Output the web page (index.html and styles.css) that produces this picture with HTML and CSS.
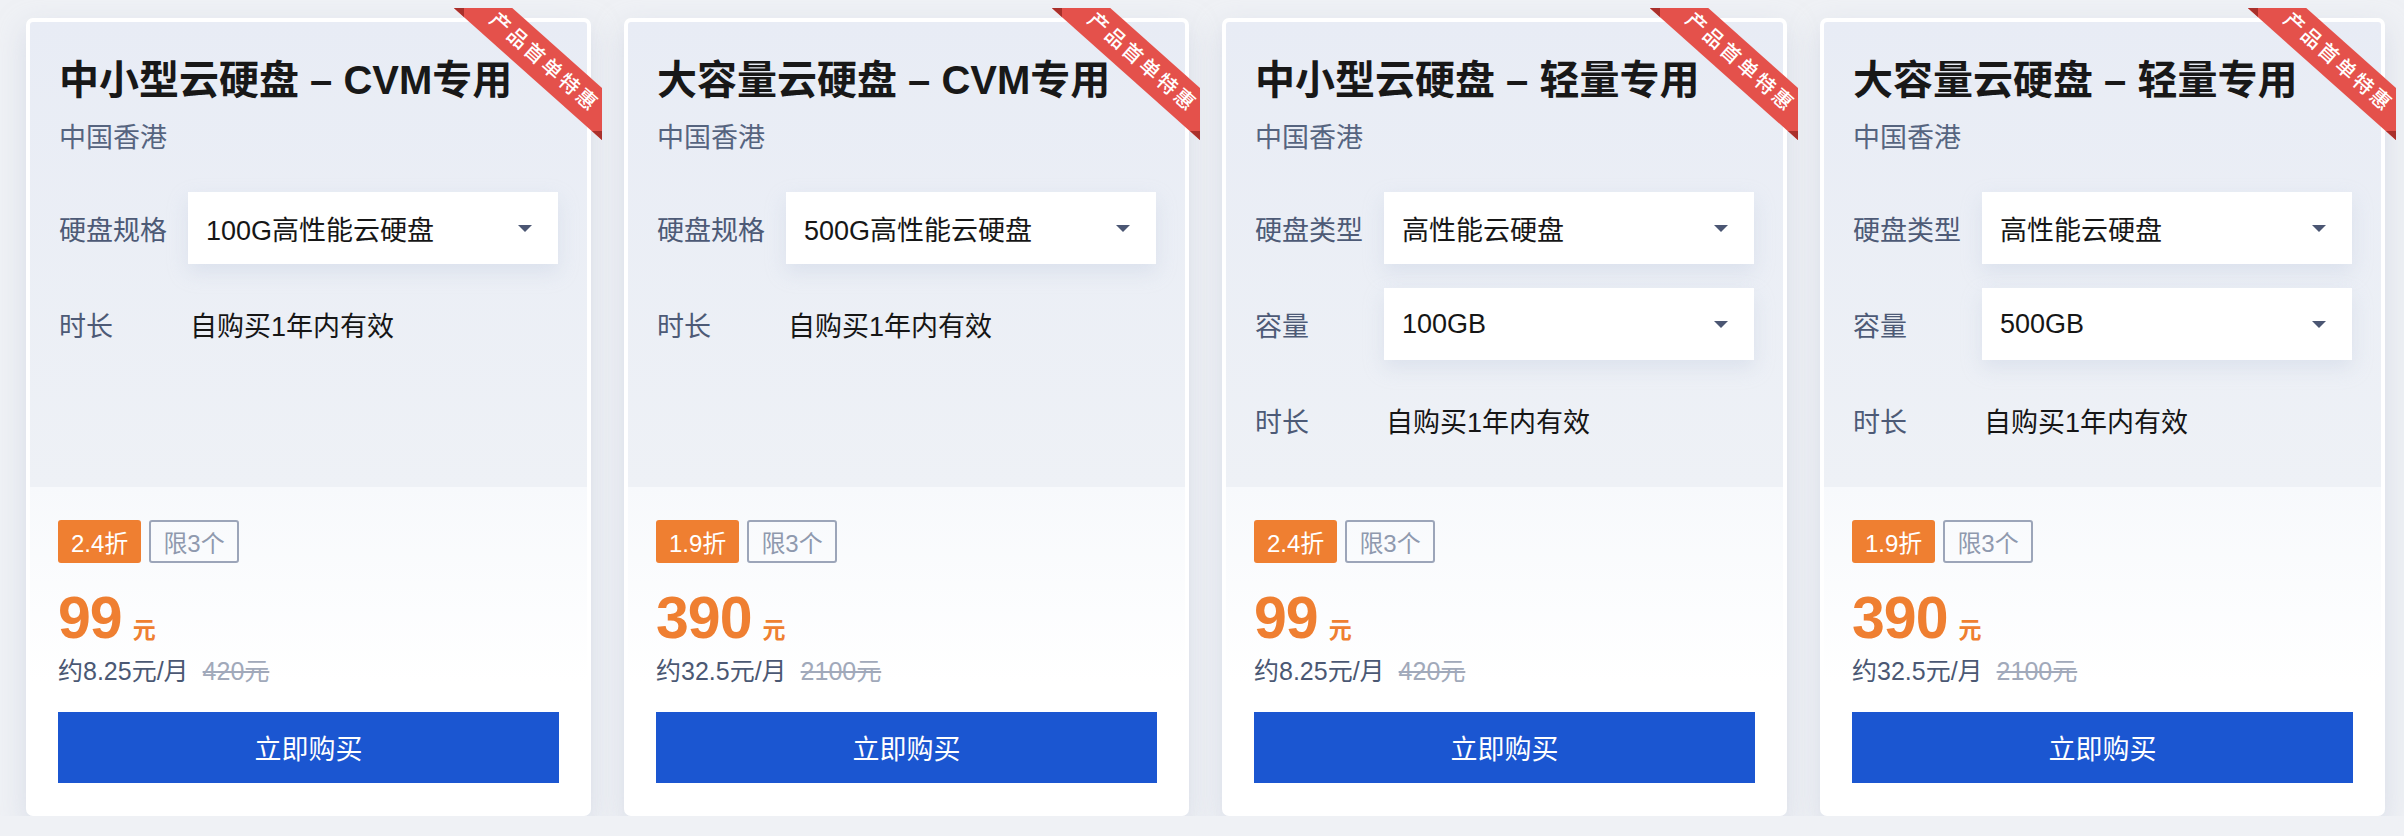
FILE: index.html
```html
<!DOCTYPE html>
<html lang="zh-CN">
<head>
<meta charset="utf-8">
<title>云硬盘特惠</title>
<link rel="stylesheet" href="styles.css">
</head>
<body>
<div class="cards">

  <div class="card">
    <div class="ribbon"><span>产品首单特惠</span></div>
    <div class="top">
      <h2 class="title">中小型云硬盘 – CVM专用</h2>
      <div class="region">中国香港</div>
      <div class="rows">
        <div class="row"><span class="label">硬盘规格</span><div class="select"><span>100G高性能云硬盘</span><i class="arrow"></i></div></div>
        <div class="row"><span class="label">时长</span><span class="value">自购买1年内有效</span></div>
      </div>
    </div>
    <div class="bottom">
      <div class="tags"><span class="tag-off">2.4折</span><span class="tag-limit">限3个</span></div>
      <div class="price"><span class="num">99</span><span class="unit">元</span></div>
      <div class="monthly"><span>约8.25元/月</span><s>420元</s></div>
      <button class="buy">立即购买</button>
    </div>
  </div>

  <div class="card">
    <div class="ribbon"><span>产品首单特惠</span></div>
    <div class="top">
      <h2 class="title">大容量云硬盘 – CVM专用</h2>
      <div class="region">中国香港</div>
      <div class="rows">
        <div class="row"><span class="label">硬盘规格</span><div class="select"><span>500G高性能云硬盘</span><i class="arrow"></i></div></div>
        <div class="row"><span class="label">时长</span><span class="value">自购买1年内有效</span></div>
      </div>
    </div>
    <div class="bottom">
      <div class="tags"><span class="tag-off">1.9折</span><span class="tag-limit">限3个</span></div>
      <div class="price"><span class="num">390</span><span class="unit">元</span></div>
      <div class="monthly"><span>约32.5元/月</span><s>2100元</s></div>
      <button class="buy">立即购买</button>
    </div>
  </div>

  <div class="card">
    <div class="ribbon"><span>产品首单特惠</span></div>
    <div class="top">
      <h2 class="title">中小型云硬盘 – 轻量专用</h2>
      <div class="region">中国香港</div>
      <div class="rows">
        <div class="row"><span class="label">硬盘类型</span><div class="select"><span>高性能云硬盘</span><i class="arrow"></i></div></div>
        <div class="row"><span class="label">容量</span><div class="select"><span>100GB</span><i class="arrow"></i></div></div>
        <div class="row"><span class="label">时长</span><span class="value">自购买1年内有效</span></div>
      </div>
    </div>
    <div class="bottom">
      <div class="tags"><span class="tag-off">2.4折</span><span class="tag-limit">限3个</span></div>
      <div class="price"><span class="num">99</span><span class="unit">元</span></div>
      <div class="monthly"><span>约8.25元/月</span><s>420元</s></div>
      <button class="buy">立即购买</button>
    </div>
  </div>

  <div class="card">
    <div class="ribbon"><span>产品首单特惠</span></div>
    <div class="top">
      <h2 class="title">大容量云硬盘 – 轻量专用</h2>
      <div class="region">中国香港</div>
      <div class="rows">
        <div class="row"><span class="label">硬盘类型</span><div class="select"><span>高性能云硬盘</span><i class="arrow"></i></div></div>
        <div class="row"><span class="label">容量</span><div class="select"><span>500GB</span><i class="arrow"></i></div></div>
        <div class="row"><span class="label">时长</span><span class="value">自购买1年内有效</span></div>
      </div>
    </div>
    <div class="bottom">
      <div class="tags"><span class="tag-off">1.9折</span><span class="tag-limit">限3个</span></div>
      <div class="price"><span class="num">390</span><span class="unit">元</span></div>
      <div class="monthly"><span>约32.5元/月</span><s>2100元</s></div>
      <button class="buy">立即购买</button>
    </div>
  </div>

</div>
</body>
</html>
```
FILE: styles.css
```css
* { box-sizing: border-box; }

html, body {
  margin: 0;
  padding: 0;
  background: #eff1f5;
  font-family: "Liberation Sans", "Noto Sans CJK SC", sans-serif;
}

.cards {
  display: flex;
  gap: 33px;
  padding: 18px 0 0 26px;
}

.card {
  position: relative;
  width: 565px;
  height: 798px;
  flex: none;
  background: #fff;
  border-radius: 7px;
  padding: 4px;
  display: flex;
  flex-direction: column;
  box-shadow: 0 10px 28px rgba(196, 204, 220, 0.55);
}

.top {
  height: 465px;
  flex: none;
  padding: 33px 29px 0 29px;
  background: linear-gradient(180deg, #e8ecf5 0%, #eef1f6 100%);
  border-radius: 3px 3px 0 0;
}

.title {
  margin: 0;
  font-size: 40px;
  line-height: 50px;
  font-weight: 600;
  color: #181818;
  white-space: nowrap;
}

.region {
  margin-top: 15px;
  font-size: 27px;
  line-height: 36px;
  color: #56647f;
}

.rows {
  margin-top: 36px;
  display: flex;
  flex-direction: column;
  gap: 24px;
}

.row {
  display: flex;
  align-items: center;
  height: 72px;
}

.label {
  width: 129px;
  flex: none;
  font-size: 27px;
  color: #4d5a76;
}

.select {
  flex: 1;
  height: 72px;
  display: flex;
  align-items: center;
  justify-content: space-between;
  padding: 0 26px 0 18px;
  background: #fff;
  font-size: 27px;
  color: #161616;
  box-shadow: 0 8px 18px rgba(190, 200, 222, 0.35);
}

.arrow {
  width: 0;
  height: 0;
  border-left: 7px solid transparent;
  border-right: 7px solid transparent;
  border-top: 7px solid #4b5673;
}

.value {
  font-size: 27px;
  color: #161616;
  padding-left: 2px;
}

.bottom {
  flex: 1;
  padding: 33px 28px 0 28px;
  background: linear-gradient(180deg, #f7f9fc 0%, #ffffff 60%);
  border-radius: 0 0 4px 4px;
}

.tags {
  display: flex;
  gap: 8px;
  height: 43px;
}

.tag-off,
.tag-limit {
  display: flex;
  align-items: center;
  justify-content: center;
  height: 43px;
  border-radius: 3px;
  font-size: 24px;
}

.tag-off {
  padding: 0 13px;
  background: #ef7f31;
  color: #fff;
}

.tag-limit {
  padding: 0 12px;
  border: 2px solid #9ca5b9;
  color: #8f99ae;
}

.price {
  margin-top: 27px;
  display: flex;
  align-items: baseline;
  color: #ef7f31;
  height: 56px;
}

.num {
  font-size: 59px;
  line-height: 56px;
  font-weight: 700;
  letter-spacing: -1px;
}

.unit {
  margin-left: 11px;
  font-size: 23px;
  font-weight: 700;
}

.monthly {
  margin-top: 10px;
  height: 30px;
  line-height: 30px;
  font-size: 25px;
  color: #4b5873;
  display: flex;
  gap: 14px;
}

.monthly s {
  color: #a1a9ba;
}

.buy {
  display: block;
  margin-top: 26px;
  width: 100%;
  height: 71px;
  border: none;
  background: #1b56d1;
  color: #fff;
  font-family: inherit;
  font-size: 27px;
  cursor: pointer;
}

/* corner ribbon */
.ribbon {
  position: absolute;
  top: -10px;
  right: -11px;
  width: 148px;
  height: 132px;
  overflow: hidden;
  z-index: 2;
}

.ribbon span {
  position: absolute;
  left: -31px;
  top: 34px;
  width: 240px;
  height: 39px;
  padding-left: 3px;
  background: #e4514b;
  color: #fff;
  font-size: 20px;
  font-weight: 500;
  line-height: 39px;
  letter-spacing: 3px;
  text-align: center;
  transform: rotate(41.7deg);
}

.ribbon::before,
.ribbon::after {
  content: "";
  position: absolute;
  width: 10px;
  height: 9px;
  background: #a9302b;
  clip-path: polygon(0 0, 100% 0, 100% 100%);
  z-index: 3;
}

.ribbon::before { left: 0; top: 0; }
.ribbon::after { right: 0; bottom: 0; }
```
